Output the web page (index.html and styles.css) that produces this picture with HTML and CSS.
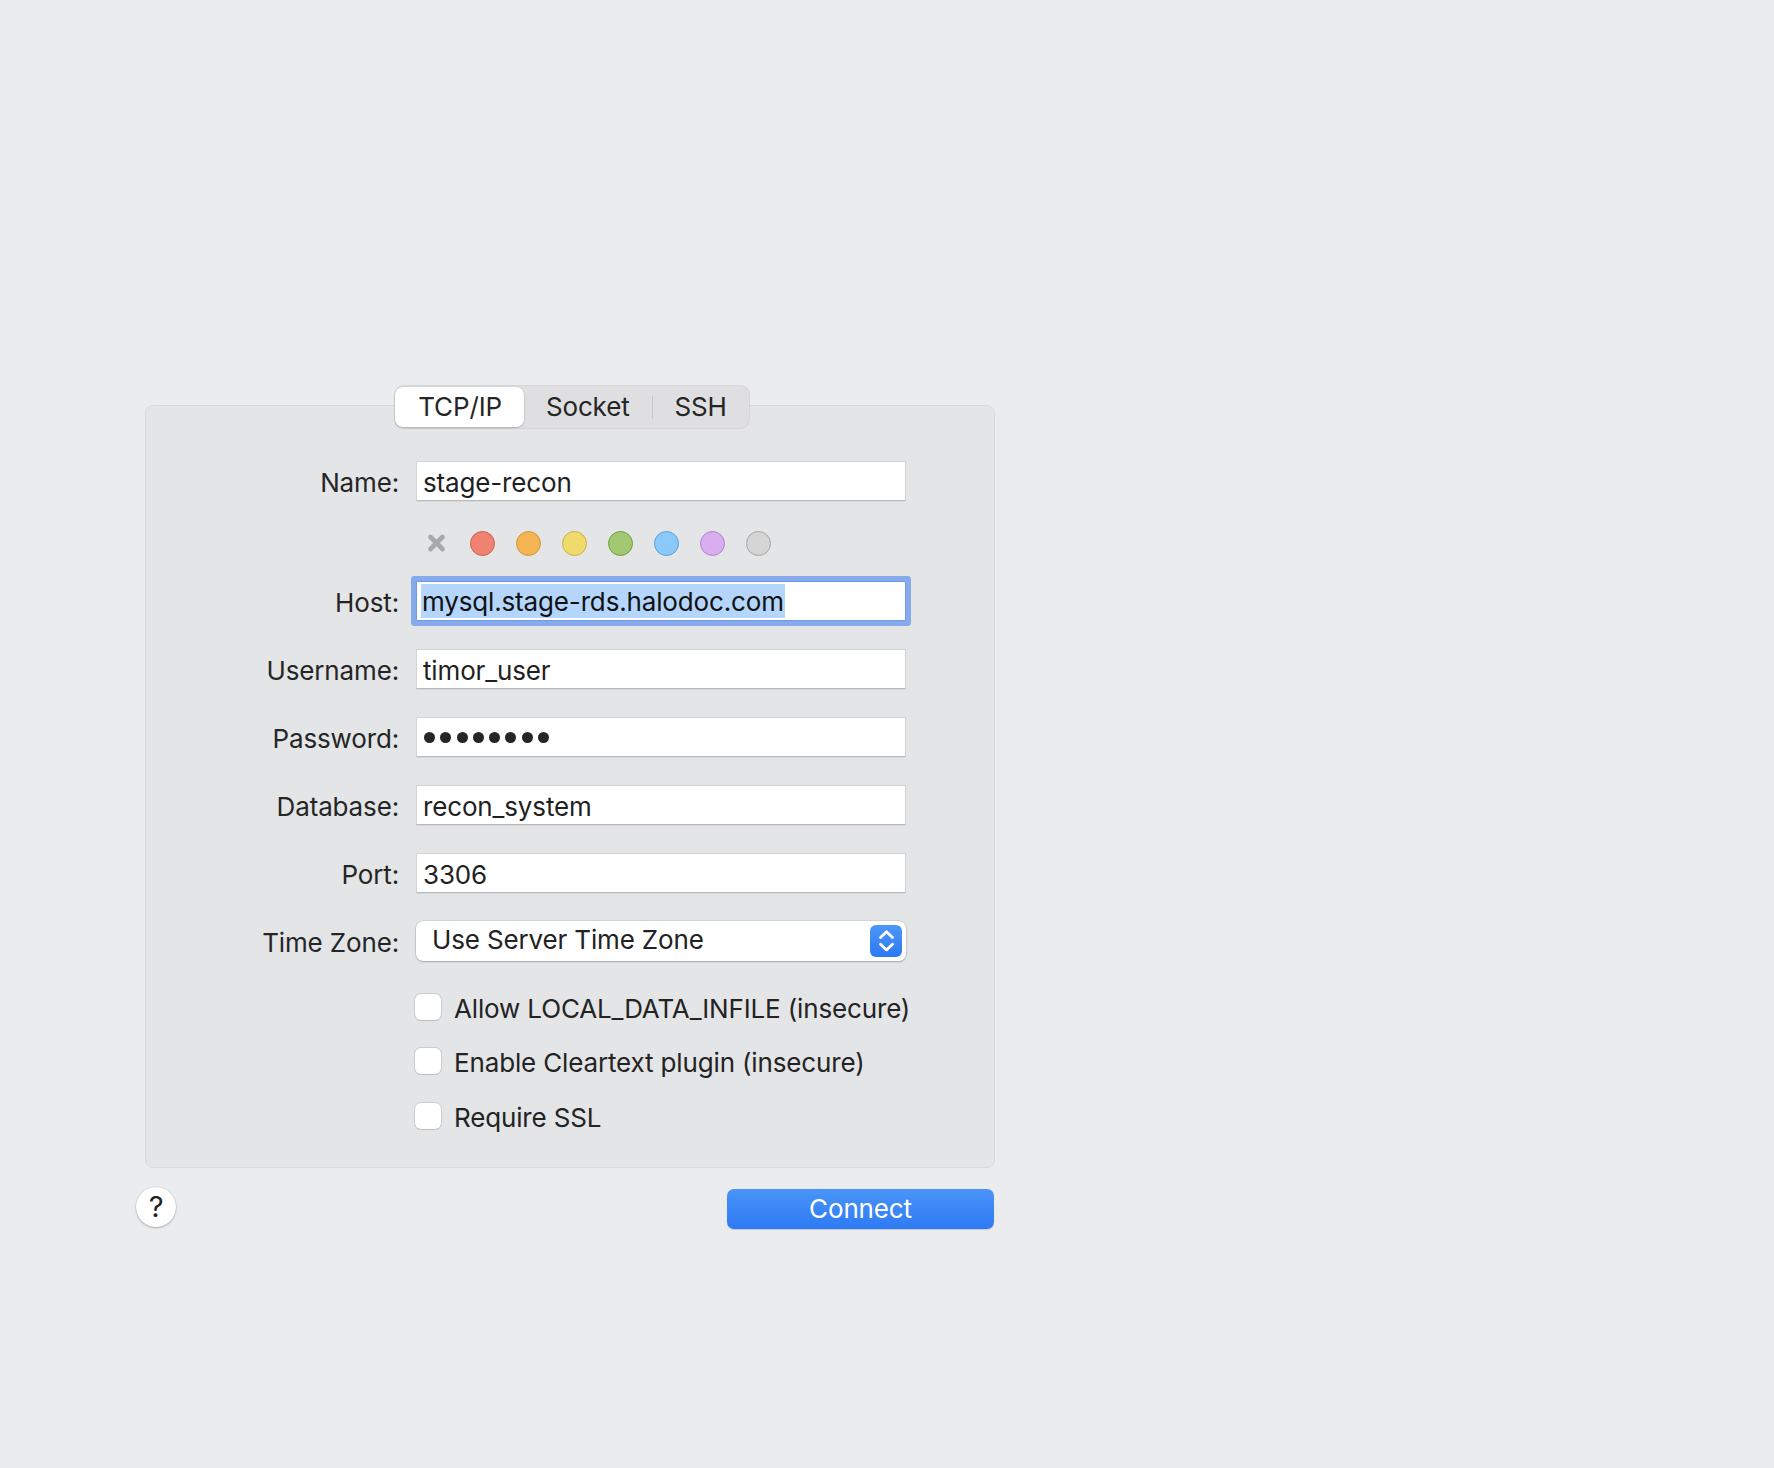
FILE: index.html
```html
<!DOCTYPE html>
<html lang="en">
<head>
<meta charset="utf-8">
<title>Connection</title>
<link rel="stylesheet" href="styles.css">
</head>
<body>
<div class="page">
  <div class="dialog">
    <div class="tabs-wrap">
      <div class="segmented">
        <div class="seg seg-selected">TCP/IP</div>
        <div class="seg">Socket</div>
        <div class="seg-sep"></div>
        <div class="seg">SSH</div>
      </div>
    </div>
    <div class="panel">
      <div class="row row-first">
        <div class="label">Name:</div>
        <div class="field">stage-recon</div>
      </div>
      <div class="row row-colors">
        <div></div>
        <div class="colors">
          <span class="color-none">
            <svg width="25" height="25" viewBox="0 0 25 25"><path d="M6.5 6 L18.5 18 M18.5 6 L6.5 18" stroke="#a9a9a9" stroke-width="4.8" stroke-linecap="round" fill="none"/></svg>
          </span>
          <span class="dot dot-red"></span>
          <span class="dot dot-orange"></span>
          <span class="dot dot-yellow"></span>
          <span class="dot dot-green"></span>
          <span class="dot dot-blue"></span>
          <span class="dot dot-purple"></span>
          <span class="dot dot-grey"></span>
        </div>
      </div>
      <div class="row row-host">
        <div class="label">Host:</div>
        <div class="field field-focus"><span class="selected-text">mysql.stage-rds.halodoc.com</span></div>
      </div>
      <div class="row">
        <div class="label">Username:</div>
        <div class="field">timor_user</div>
      </div>
      <div class="row">
        <div class="label">Password:</div>
        <div class="field field-password">
          <span class="pw"></span><span class="pw"></span><span class="pw"></span><span class="pw"></span><span class="pw"></span><span class="pw"></span><span class="pw"></span><span class="pw"></span>
        </div>
      </div>
      <div class="row">
        <div class="label">Database:</div>
        <div class="field">recon_system</div>
      </div>
      <div class="row">
        <div class="label">Port:</div>
        <div class="field">3306</div>
      </div>
      <div class="row">
        <div class="label">Time Zone:</div>
        <div class="select">
          <span class="select-text">Use Server Time Zone</span>
          <span class="stepper">
            <svg width="32" height="32" viewBox="0 0 32 32"><path d="M10.5 12.5 L16.5 6.8 L22.5 12.5 M10.5 19.2 L16.5 24.9 L22.5 19.2" stroke="#fff" stroke-width="2.8" stroke-linecap="round" stroke-linejoin="round" fill="none"/></svg>
          </span>
        </div>
      </div>
      <div class="row row-check row-check-first">
        <div></div>
        <div class="check"><span class="box"></span><span class="check-label">Allow LOCAL_DATA_INFILE (insecure)</span></div>
      </div>
      <div class="row row-check row-check-second">
        <div></div>
        <div class="check"><span class="box"></span><span class="check-label">Enable Cleartext plugin (insecure)</span></div>
      </div>
      <div class="row row-check">
        <div></div>
        <div class="check"><span class="box"></span><span class="check-label">Require SSL</span></div>
      </div>
    </div>
    <div class="footer">
      <div class="help">?</div>
      <div class="connect">Connect</div>
    </div>
  </div>
</div>
</body>
</html>
```
FILE: styles.css
```css
html, body {
  margin: 0;
  padding: 0;
}
body {
  background: #ebecee;
  font-family: Inter, "Noto Sans", "Liberation Sans", sans-serif;
  font-size: 26px;
  letter-spacing: -0.15px;
  color: #232323;
  width: 1774px;
  height: 1468px;
  overflow: hidden;
}
.page {
  padding: 385px 0 0 136px;
}
.dialog {
  width: 858px;
  display: flex;
  flex-direction: column;
}
.tabs-wrap {
  margin-left: 9px;
  width: 850px;
  display: flex;
  justify-content: center;
  position: relative;
  z-index: 2;
  padding-left: 2px;
}
.segmented {
  display: flex;
  align-items: center;
  height: 44px;
  box-sizing: border-box;
  padding: 2px 1px;
  border-radius: 10px;
  background: #dfdfe1;
  box-shadow: inset 0 0 0 1px #d6d6d8;
}
.seg {
  height: 40px;
  line-height: 40px;
  padding: 0 22px;
  color: #252525;
  border-radius: 8px;
}
.seg-selected {
  background: #fff;
  box-shadow: 0 1px 2px rgba(0, 0, 0, 0.18), 0 0 0 0.5px rgba(0, 0, 0, 0.06);
  padding: 0 22px 0 23px;
}
.seg-sep {
  width: 1px;
  height: 23px;
  background: #c9c9cb;
}
.panel {
  margin-left: 9px;
  width: 850px;
  box-sizing: border-box;
  margin-top: -24px;
  background: #e4e5e7;
  border: 1px solid #d9dadc;
  border-radius: 8px;
  padding: 55px 0 38px 0;
  display: flex;
  flex-direction: column;
}
.row {
  display: grid;
  grid-template-columns: 253px 490px;
  column-gap: 17px;
  margin-top: 28px;
}
.row-first {
  margin-top: 0;
}
.row-colors {
  margin-top: 30px;
}
.row-host {
  margin-top: 26px;
}
.label {
  text-align: right;
  height: 40px;
  line-height: 36px;
  padding-top: 4px;
  box-sizing: border-box;
  color: #252525;
}
.field {
  height: 40px;
  box-sizing: border-box;
  background: #fff;
  border: 1px solid #d4d4d6;
  border-bottom-color: #b9b9bb;
  box-shadow: 0 1px 0 rgba(0, 0, 0, 0.05);
  padding: 3px 0 0 6px;
  line-height: 36px;
  color: #1f1f1f;
  white-space: nowrap;
}
.field-focus {
  border: 1px solid #7199e4;
  border-radius: 1px;
  box-shadow: 0 0 0 5px #87aaec;
  padding: 0 0 0 4px;
  display: flex;
  align-items: center;
}
.selected-text {
  display: inline-block;
  height: 34px;
  line-height: 36px;
  padding: 0 1px 0 1px;
  box-sizing: border-box;
  background: #b4d5fc;
  color: #111;
}
.field-password {
  display: flex;
  align-items: center;
  gap: 5.3px;
  padding: 0 0 0 7px;
}
.pw {
  width: 11px;
  height: 11px;
  border-radius: 50%;
  background: #262626;
}
.colors {
  display: flex;
  align-items: center;
  gap: 21px;
  padding-left: 8px;
  height: 24px;
}
.color-none {
  width: 25px;
  height: 25px;
  display: flex;
}
.dot {
  width: 25px;
  height: 25px;
  box-sizing: border-box;
  border-radius: 50%;
  border: 1.6px solid;
}
.dot-red { background: #ef8270; border-color: #c9624f; }
.dot-orange { background: #f5b454; border-color: #d6943c; }
.dot-yellow { background: #efda6b; border-color: #c8b144; }
.dot-green { background: #a2c971; border-color: #6f9d45; }
.dot-blue { background: #8bc9fa; border-color: #5c9fd6; }
.dot-purple { background: #d9aef1; border-color: #af85c8; }
.dot-grey { background: #d5d5d5; border-color: #a6a6a6; }
.select {
  height: 40px;
  box-sizing: border-box;
  background: #fff;
  border-radius: 7px;
  box-shadow: 0 0 0 0.5px rgba(0, 0, 0, 0.14), 0 1px 2px rgba(0, 0, 0, 0.22);
  display: flex;
  align-items: center;
  justify-content: space-between;
  padding: 0 4px 0 16px;
}
.select-text {
  color: #222;
  margin-top: -3px;
}
.stepper {
  width: 32px;
  height: 32px;
  border-radius: 6px;
  background: linear-gradient(#4e96f8, #2c7af5);
  display: flex;
}
.row-check {
  margin-top: 29px;
}
.row-check-first {
  margin-top: 33px;
}
.row-check-second {
  margin-top: 28px;
}
.check {
  display: flex;
  align-items: center;
  height: 26px;
  white-space: nowrap;
  margin-left: -1px;
}
.box {
  width: 26px;
  height: 26px;
  box-sizing: border-box;
  border-radius: 6px;
  background: #fff;
  box-shadow: 0 0 0 1px rgba(0, 0, 0, 0.1), 0 1px 1px rgba(0, 0, 0, 0.08);
  flex: none;
}
.check-label {
  margin-left: 13px;
  line-height: 26px;
  padding-top: 3px;
  color: #232323;
}
.footer {
  display: flex;
  justify-content: space-between;
  align-items: flex-start;
  margin-top: 19px;
}
.help {
  width: 40px;
  height: 40px;
  border-radius: 50%;
  background: #fff;
  box-shadow: 0 0 0 0.5px rgba(0, 0, 0, 0.12), 0 1px 2px rgba(0, 0, 0, 0.25);
  text-align: center;
  line-height: 40px;
  color: #222;
  font-size: 29px;
}
.connect {
  margin-top: 2px;
  width: 267px;
  height: 40px;
  border-radius: 7px;
  background: linear-gradient(#4a94f8, #2e7af5);
  color: #fff;
  text-align: center;
  line-height: 40px;
  box-shadow: 0 0.5px 1px rgba(0, 0, 0, 0.15);
}
```
